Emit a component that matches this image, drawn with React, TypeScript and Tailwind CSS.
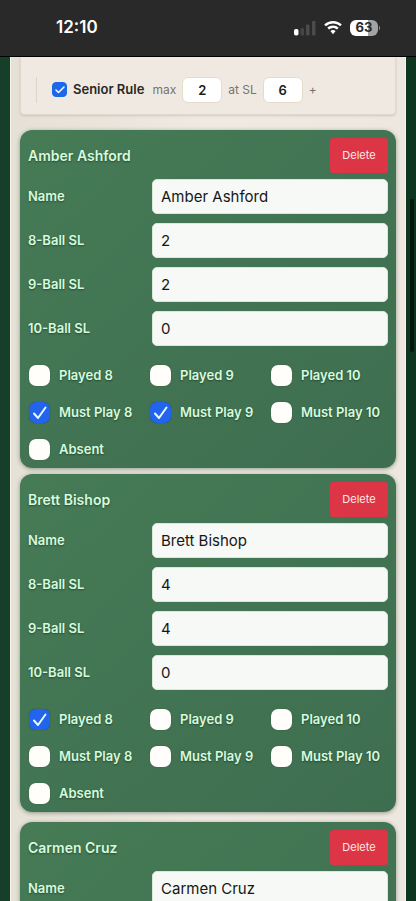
import { useState } from 'react';
import { Check } from 'lucide-react';

type Player = {
  id: string;
  name: string;
  levels: [string, string, string] | null;
  flags: string[];
};

const PLAYERS: Player[] = [
  { id: 'amber', name: 'Amber Ashford', levels: ['2', '2', '0'], flags: ['Must Play 8', 'Must Play 9'] },
  { id: 'brett', name: 'Brett Bishop', levels: ['4', '4', '0'], flags: ['Played 8'] },
  { id: 'carmen', name: 'Carmen Cruz', levels: null, flags: [] },
];

const LEVEL_LABELS = ['8-Ball SL', '9-Ball SL', '10-Ball SL'];
const FLAGS = ['Played 8', 'Played 9', 'Played 10', 'Must Play 8', 'Must Play 9', 'Must Play 10', 'Absent'];

function StatusBar() {
  return (
    <header className="relative z-10 flex h-[57px] shrink-0 items-center justify-between border-b border-black bg-[#292929] pr-9 pl-14 text-white">
      <span className="text-[17px] font-semibold">12:10</span>
      <div className="flex items-center gap-2">
        <svg width="22" height="16" viewBox="0 0 22 16" aria-label="Signal">
          <rect x="0" y="9" width="4.500" height="6.500" rx="1.800" fill="#fff" />
          <rect x="6.500" y="8" width="3.500" height="7.500" rx="1" fill="#454545" />
          <rect x="12" y="4.500" width="3.500" height="11" rx="1" fill="#4b4b4b" />
          <rect x="18" y="1" width="3.500" height="14.500" rx="1" fill="#4b4b4b" />
        </svg>
        <svg width="18" height="14" viewBox="0 0 18 14" aria-label="Wi-Fi">
          <path d="M9 0C5.600 0 2.500 1.300.2 3.500L1.900 5.300A10.300 10.300 0 0 1 9 2.500c2.700 0 5.200 1 7.100 2.800l1.700-1.800A12.700 12.700 0 0 0 9 0Z" fill="#fff" />
          <path d="M9 4.500c-2.200 0-4.200.9-5.700 2.300L5 8.600A5.800 5.800 0 0 1 9 7c1.500 0 2.900.6 4 1.600l1.700-1.800A8.200 8.200 0 0 0 9 4.500Z" fill="#fff" />
          <path d="M9 9c-1 0-1.900.4-2.600 1L9 13.300l2.600-3.300C10.900 9.400 10 9 9 9Z" fill="#fff" />
        </svg>
        <div className="flex items-center gap-px">
          <span className="flex h-4 w-7 items-center justify-center rounded-md bg-linear-to-r from-white from-63% to-[#a3a3a3] to-63% text-[13px] font-bold text-[#292929]">
            63
          </span>
          <span className="h-1 w-px rounded-r bg-[#8a8a8a]" />
        </div>
      </div>
    </header>
  );
}

function SeniorRule() {
  const field =
    'h-[26px] w-10 rounded-md border border-[#e4dccb] bg-white text-center text-[13px] font-semibold text-[#1c1c1c]';

  return (
    <section className="h-[58px] rounded-b-sm border border-t-0 border-[#dfd8cb] bg-[#efe9e1] pt-5 pl-[15px] shadow-sm">
      <div className="flex h-[26px] items-center border-l border-[#dbd5ca] pl-[15px] text-xs text-[#77736d]">
        <label className="flex items-center gap-1.5 text-[13px] font-semibold text-[#292725]">
          <span className="relative flex">
            <input type="checkbox" defaultChecked className="peer size-[15px] appearance-none rounded border border-[#999] bg-white checked:border-[#1d68e8] checked:bg-[#1d68e8]" />
            <Check className="pointer-events-none absolute inset-0 m-auto hidden size-3 text-white peer-checked:block" strokeWidth={3} />
          </span>
          Senior Rule
        </label>
        <label className="ml-2 flex items-center gap-1.5">
          max
          <input className={field} defaultValue="2" />
        </label>
        <label className="ml-1.5 flex items-center gap-1.5">
          at SL
          <input className={field} defaultValue="6" />
        </label>
        <span className="ml-1.5">+</span>
      </div>
    </section>
  );
}

function Flag({ label, defaultChecked }: { label: string; defaultChecked: boolean }) {
  return (
    <label className="flex h-[21px] items-center gap-[9px] whitespace-nowrap">
      <span className="relative flex">
        <input
          type="checkbox"
          defaultChecked={defaultChecked}
          className="peer size-[21px] appearance-none rounded-[7px] bg-[#fffefb] shadow-[0_0_1px_rgba(40,50,40,0.8)] checked:bg-[#2264ed]"
        />
        <svg viewBox="0 0 21 21" className="pointer-events-none absolute inset-0 hidden size-[21px] peer-checked:block">
          <path d="M5 11.500 9 16 16.500 5.500" fill="none" stroke="#e8fbff" strokeWidth="2" strokeLinecap="round" strokeLinejoin="round" />
        </svg>
      </span>
      {label}
    </label>
  );
}

function PlayerCard({ player, onDelete }: { player: Player; onDelete: () => void }) {
  const row = 'grid grid-cols-[1fr_2fr] items-center gap-1.5';
  const field =
    'h-[35px] w-full min-w-0 rounded-[5px] border border-[#dce8d7] bg-[#f6f9f5] px-2 text-[15px] font-normal text-[#171717] text-shadow-none';

  return (
    <article className="min-h-80 rounded-xl bg-linear-to-br from-[#467b56] to-[#3e6e50] p-2 text-[13px] font-semibold text-[#d5fbdc] shadow-[0_1px_4px_rgba(30,60,35,0.45)] text-shadow-[0_1px_2px_rgba(0,0,0,0.4)] odd:mb-1.5 even:mb-2.5">
      <div className="flex items-center justify-between">
        <h2 className="text-sm font-semibold">{player.name}</h2>
        <button
          type="button"
          onClick={onDelete}
          className="h-[35px] w-[58px] rounded-[3px] bg-[#dc3545] text-[11px] font-normal text-[#ffe9e9]"
        >
          Delete
        </button>
      </div>
      <div className="mt-1.5 space-y-[9px]">
        <label className={row}>
          Name
          <input className={field} defaultValue={player.name} />
        </label>
        {player.levels?.map((level, i) => (
          <label key={LEVEL_LABELS[i]} className={row}>
            {LEVEL_LABELS[i]}
            <input className={field} inputMode="numeric" defaultValue={level} />
          </label>
        ))}
      </div>
      {player.levels && (
        <div className="mt-[19px] grid grid-cols-3 gap-x-[5px] gap-y-4 px-px">
          {FLAGS.map((flag) => (
            <Flag key={flag} label={flag} defaultChecked={player.flags.includes(flag)} />
          ))}
        </div>
      )}
    </article>
  );
}

export default function App() {
  const [players, setPlayers] = useState(PLAYERS);

  return (
    <div className="relative flex h-screen flex-col overflow-hidden bg-linear-to-r from-[#153f28] to-[#0d3520] font-['Inter','Liberation_Sans',sans-serif]">
      <StatusBar />
      <main className="mx-2.5 min-h-0 flex-1 overflow-y-auto border-x border-[#f8f3e9] bg-linear-to-r from-[#e5e1d6] via-[#efeae2] to-[#eee7df] px-[9px] [scrollbar-width:none]">
        <SeniorRule />
        <div className="mt-[15px]">
          {players.map((player) => (
            <PlayerCard
              key={player.id}
              player={player}
              onDelete={() => setPlayers(players.filter((p) => p.id !== player.id))}
            />
          ))}
        </div>
      </main>
      <div className="absolute top-[199px] right-0.5 h-[153px] w-1 rounded-full bg-[#06170d]" />
    </div>
  );
}
